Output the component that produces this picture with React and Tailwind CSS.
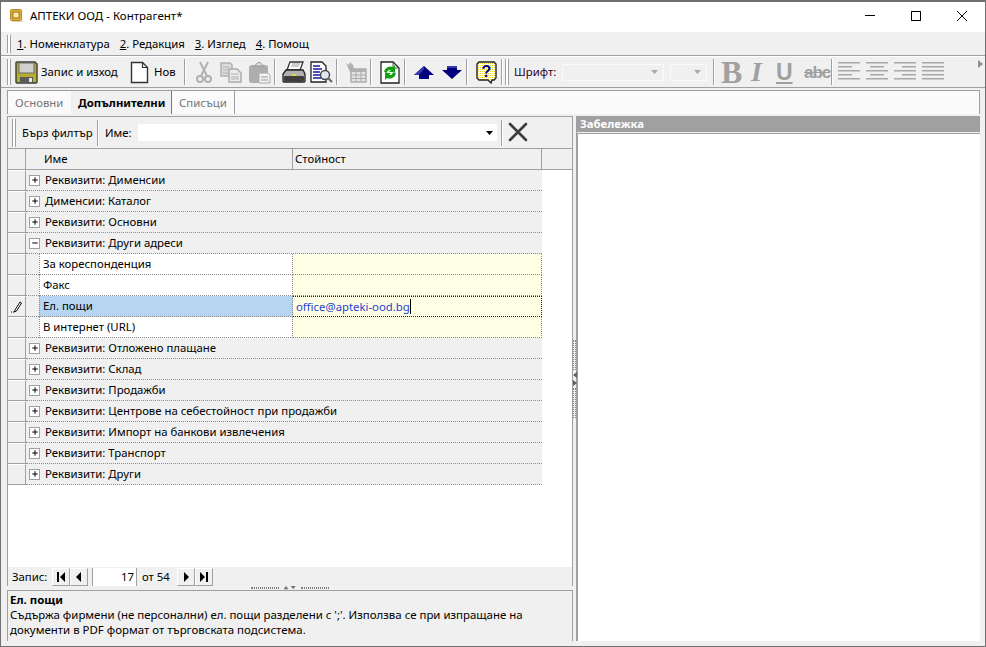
import { Plus, Minus } from "lucide-react";

const Grip = ({ h = "h-[22px]" }) => (
  <div className={`w-[4px] ${h} border-x border-[#a0a0a0] bg-white shrink-0`} />
);

const Sep = ({ h = "h-[26px]", ml = "ml-[6px]", mr = "mr-[6px]" }) => (
  <div className={`w-[2px] ${h} ${ml} ${mr} border-l border-[#a0a0a0] bg-white shrink-0`} />
);

const SaveIcon = () => (
  <svg width="23" height="23" viewBox="0 0 23 23">
    <path d="M1 2a1 1 0 0 1 1-1h18l2 2v18a1 1 0 0 1-1 1H2a1 1 0 0 1-1-1z" fill="#b5ad2c" stroke="#3a3a3a" strokeWidth="1.4" />
    <rect x="4" y="2" width="15" height="10" fill="#cfcfcf" stroke="#6a6a6a" />
    <rect x="5" y="16" width="13" height="6" fill="#5a5a5a" />
    <rect x="14" y="17" width="3" height="4" fill="#e8e8e8" />
  </svg>
);

const NewIcon = () => (
  <svg width="19" height="23" viewBox="0 0 19 23">
    <path d="M1.500 1.500h11l5 5v15h-16z" fill="#fff" stroke="#333" strokeWidth="1.4" />
    <path d="M12.500 1.500v5h5" fill="none" stroke="#333" strokeWidth="1.2" />
  </svg>
);

const CutIcon = () => (
  <svg width="16" height="23" viewBox="0 0 16 23" fill="none" stroke="#b0b0b0" strokeWidth="2">
    <path d="M4 1l7 14M12 1L5 15" />
    <circle cx="4" cy="18" r="3" />
    <circle cx="12" cy="18" r="3" />
  </svg>
);

const CopyIcon = () => (
  <svg width="22" height="21" viewBox="0 0 22 21">
    <path d="M1 1h9l2 2v11H1z" fill="#dcdcdc" stroke="#b0b0b0" strokeWidth="1.5" />
    <path d="M9 7h8l4 4v9H9z" fill="#ececec" stroke="#aaa" strokeWidth="1.5" />
    <path d="M3 5h6M3 8h5M3 11h5M11 12h8M11 15h8M11 17h8" stroke="#b0b0b0" />
  </svg>
);

const PasteIcon = () => (
  <svg width="23" height="23" viewBox="0 0 23 23">
    <rect x="1" y="4" width="19" height="18" rx="3" fill="#adadad" />
    <path d="M6 5l5-4 5 4z" fill="#ddd" stroke="#999" />
    <path d="M11 12h9l2 2v8H11z" fill="#f2f2f2" stroke="#aaa" />
    <path d="M13 16h7M13 19h7" stroke="#999" />
  </svg>
);

const PrintIcon = () => (
  <svg width="24" height="23" viewBox="0 0 24 23">
    <path d="M8 1h13l-3 8H5z" fill="#fff" stroke="#333" strokeWidth="1.3" />
    <path d="M10 3h8M9 5h8" stroke="#999" />
    <path d="M4 9h17l2 4v7a1 1 0 0 1-1 1H2a1 1 0 0 1-1-1v-7z" fill="#b0b0b0" stroke="#222" strokeWidth="1.3" />
    <rect x="2" y="15" width="20" height="5" rx="1" fill="#3d3d3d" />
    <rect x="10" y="13" width="4" height="2" fill="#e3d23a" />
  </svg>
);

const PreviewIcon = () => (
  <svg width="23" height="23" viewBox="0 0 23 23">
    <path d="M1 1h11l4 4v16H1z" fill="#fff" stroke="#222" strokeWidth="1.3" />
    <path d="M3 5h7M3 8h9M3 11h7M3 14h7M3 17h8" stroke="#1a1a9c" strokeWidth="1.6" />
    <circle cx="15" cy="14" r="4.500" fill="#dfe8ee" stroke="#444" strokeWidth="1.4" />
    <path d="M18 17l4 4" stroke="#666" strokeWidth="2.2" />
  </svg>
);

const TableIcon = () => (
  <svg width="22" height="23" viewBox="0 0 22 23">
    <path d="M1 2l3 2 1-3 3 3 1 4 4 2-4 3H6z" fill="#b0b0b0" />
    <rect x="6" y="8" width="15" height="13" fill="#e4e4e4" stroke="#aaa" strokeWidth="1.4" />
    <rect x="6" y="8" width="15" height="3" fill="#b0b0b0" />
    <path d="M11 11v10M16 11v10M6 14h15M6 17.500h15" stroke="#aaa" />
  </svg>
);

const RefreshIcon = () => (
  <svg width="20" height="23" viewBox="0 0 20 23">
    <path d="M1 1h12l6 6v15H1z" fill="#fff" stroke="#222" strokeWidth="1.3" />
    <path d="M13 2v5h5" fill="none" stroke="#555" />
    <path d="M4 11a6.500 6.500 0 0 1 9-5l2-2v7h-6l2-2a3.500 3.500 0 0 0-4 3z" fill="#12a012" />
    <path d="M16 12a6.500 6.500 0 0 1-9 5l-2 2v-7h6l-2 2a3.500 3.500 0 0 0 4-3z" fill="#12a012" />
  </svg>
);

const UpIcon = () => (
  <svg width="20" height="13" viewBox="0 0 20 13">
    <path d="M10 0l10 9h-5v4H5V9H0z" fill="#00007f" />
    <path d="M10 0L0 9h5l5-6z" fill="#3a3ab0" />
  </svg>
);

const DownIcon = () => (
  <svg width="20" height="13" viewBox="0 0 20 13">
    <path d="M10 13L0 4h5V0h10v4h5z" fill="#00007f" />
    <path d="M5 0h10v2H5z" fill="#3a3ab0" />
  </svg>
);

const HelpIcon = () => (
  <svg width="21" height="23" viewBox="0 0 21 23">
    <defs>
      <pattern id="dots" width="2" height="2" patternUnits="userSpaceOnUse">
        <rect width="2" height="2" fill="#fff" />
        <rect width="1" height="1" fill="#e8d830" />
      </pattern>
    </defs>
    <path d="M3 1h15l2 2v14l-2 2h-2l-1 3-3-3H3l-2-2V3z" fill="url(#dots)" stroke="#222" strokeWidth="1.4" />
    <text x="5.500" y="16" fontSize="16" fontWeight="700" fontFamily="Liberation Sans, sans-serif" fill="#00007f">?</text>
  </svg>
);

const CloseX = () => (
  <svg width="21" height="21" viewBox="0 0 21 21" stroke="#3c3c3c" strokeWidth="2.6" strokeLinecap="round">
    <path d="M2 2l16 16M18 2L2 18" />
  </svg>
);

const AlignIcon = ({ rows }) => (
  <svg width="22" height="22" viewBox="0 0 22 22" fill="#a8a8a8">
    {rows.map(([x, w], i) => (
      <rect key={i} x={x} y={1 + i * 4} width={w} height="1.500" />
    ))}
  </svg>
);

const TitleIcon = () => (
  <svg width="13" height="13" viewBox="0 0 13 13">
    <rect x="0.500" y="0.500" width="11" height="11" rx="1" fill="#dcb040" stroke="#b58a28" />
    <rect x="3" y="3" width="6" height="6" fill="#fbe9a8" stroke="#9c7418" />
    <rect x="2" y="12" width="11" height="1" fill="#d8d0b8" />
  </svg>
);

const NavBtn = ({ kind }) => (
  <div className="w-[18px] h-[18px] bg-[#f0f0f0] border border-[#a0a0a0] border-t-white border-l-white flex items-center justify-center">
    <svg width="10" height="10" viewBox="0 0 10 10" fill="#000">
      {kind === "first" && <path d="M1 0h2v10H1zM9 0v10L4 5z" />}
      {kind === "prev" && <path d="M7 0v10L2 5z" />}
      {kind === "next" && <path d="M3 0v10l5-5z" />}
      {kind === "last" && <path d="M7 0h2v10H7zM1 0v10l5-5z" />}
    </svg>
  </div>
);

const Caret = ({ color = "#000" }) => (
  <svg width="7" height="4" viewBox="0 0 7 4" fill={color}>
    <path d="M0 0h7L3.500 4z" />
  </svg>
);

const RowHead = ({ edit }) => (
  <div className="w-[18px] shrink-0 bg-[#f0f0f0] border-r border-b border-[#a0a0a0] border-t border-t-white flex items-center justify-center">
    {edit && (
      <svg width="11" height="12" viewBox="0 0 11 12" fill="none" stroke="#111">
        <path d="M4 9l5-8 1.500 1-5 8-2 1z" fill="#fff" />
        <path d="M0 11h3" strokeDasharray="1 1" />
      </svg>
    )}
  </div>
);

const GroupRow = ({ label, open }) => (
  <div className="flex h-[21px] shrink-0">
    <RowHead />
    <div className="w-[516px] flex items-center bg-[#f0f0f0] border-b border-dotted border-[#8c8c8c]">
      <div className="w-[11px] h-[11px] ml-[3px] bg-white border border-[#a0a0a0] flex items-center justify-center">
        {open ? <Minus size={8} strokeWidth={3} color="#000" /> : <Plus size={8} strokeWidth={3} color="#000" />}
      </div>
      <span className="ml-[5px] whitespace-nowrap">{label}</span>
    </div>
  </div>
);

const DataRow = ({ label, value, edit }) => (
  <div className="flex h-[21px] shrink-0">
    <RowHead edit={edit} />
    <div className="w-[13px] bg-[#f0f0f0] border-b border-dotted border-[#8c8c8c]" />
    <div className={`w-[254px] flex items-center pl-[3px] border border-t-0 border-dotted border-[#8c8c8c] ${edit ? "bg-[#b5d5f2]" : "bg-white"}`}>
      {label}
    </div>
    <div className={`w-[249px] flex items-center pl-[3px] border-b border-r border-dotted ${edit ? "border-t border-[#222] text-[#1f3fd0] bg-[#ffffe6]" : "border-[#8c8c8c] bg-[#ffffe6]"}`}>
      {value}
      {edit && <span className="w-px h-[15px] bg-black" />}
    </div>
  </div>
);

const after = [
  "Реквизити: Отложено плащане",
  "Реквизити: Склад",
  "Реквизити: Продажби",
  "Реквизити: Центрове на себестойност при продажби",
  "Реквизити: Импорт на банкови извлечения",
  "Реквизити: Транспорт",
  "Реквизити: Други",
];

export default function App() {
  return (
    <div className="w-[986px] h-[647px] bg-[#f0f0f0] border border-[#707070] border-t-2 flex flex-col overflow-hidden text-[11.35px] leading-none text-black font-['Noto_Sans','Open_Sans',sans-serif]">
      {/* title */}
      <div className="h-[30px] shrink-0 bg-white flex items-center pb-[3px] text-[11.5px]">
        <div className="ml-[9px]"><TitleIcon /></div>
        <span className="ml-[7px]">АПТЕКИ ООД - Контрагент*</span>
        <div className="ml-auto flex items-center">
          <div className="w-[46px] flex justify-center"><div className="w-[10px] h-px bg-black" /></div>
          <div className="w-[46px] flex justify-center"><div className="w-[10px] h-[10px] border border-black" /></div>
          <div className="w-[46px] flex justify-center">
            <svg width="10" height="10" viewBox="0 0 10 10" stroke="#000"><path d="M0 0l10 10M10 0L0 10" /></svg>
          </div>
        </div>
      </div>

      {/* menu */}
      <div className="h-[24px] shrink-0 flex items-center pl-[6px] border-b border-[#a0a0a0]">
        <Grip h="h-[18px]" />
        <div className="ml-[6px] flex gap-[10px]">
          <span><u>1</u>. Номенклатура</span>
          <span><u>2</u>. Редакция</span>
          <span><u>3</u>. Изглед</span>
          <span><u>4</u>. Помощ</span>
        </div>
      </div>

      {/* toolbar */}
      <div className="h-[32px] shrink-0 flex items-center pl-[6px] border-b border-[#a0a0a0] border-t border-t-white">
        <Grip h="h-[26px]" />
        <div className="ml-[4px]"><SaveIcon /></div>
        <span className="ml-[3px] w-[77px] whitespace-nowrap">Запис и изход</span>
        <div className="ml-[12px]"><NewIcon /></div>
        <span className="ml-[5px] w-[22px]">Нов</span>
        <Sep ml="ml-[8px]" mr="mr-[10px]" />
        <CutIcon />
        <div className="ml-[8px]"><CopyIcon /></div>
        <div className="ml-[6px]"><PasteIcon /></div>
        <Sep ml="ml-[3px]" mr="mr-[6px]" />
        <PrintIcon />
        <div className="ml-[4px]"><PreviewIcon /></div>
        <Sep ml="ml-[3px]" mr="mr-[7px]" />
        <TableIcon />
        <Sep ml="ml-[3px]" mr="mr-[8px]" />
        <RefreshIcon />
        <Sep ml="ml-[4px]" mr="mr-[8px]" />
        <UpIcon />
        <div className="ml-[8px]"><DownIcon /></div>
        <Sep ml="ml-[4px]" mr="mr-[8px]" />
        <HelpIcon />
        <Sep ml="ml-[4px]" mr="mr-[2px]" />
        <Grip h="h-[26px]" />
        <span className="ml-[5px] w-[42px] text-[#300020]">Шрифт:</span>
        <div className="ml-[6px] w-[102px] h-[17px] border border-[#fafafa] flex items-center justify-end pr-[5px]"><Caret color="#a8a8a8" /></div>
        <div className="ml-[6px] w-[37px] h-[17px] border border-[#fafafa] flex items-center justify-end pr-[5px]"><Caret color="#a8a8a8" /></div>
        <Sep ml="ml-[6px]" mr="mr-[6px]" />
        <span className="w-[22px] text-[32px] font-bold text-[#a0a0a0] font-['Liberation_Serif',serif]">B</span>
        <span className="ml-[8px] w-[14px] text-[28px] font-bold italic text-[#a0a0a0] font-['Liberation_Serif',serif]">I</span>
        <span className="ml-[11px] w-[17px] text-[23px] font-bold underline text-[#a0a0a0] font-['Liberation_Sans',sans-serif]">U</span>
        <span className="ml-[11px] w-[24px] text-[17px] font-bold text-[#a0a0a0] line-through tracking-[-1px] font-['Liberation_Sans',sans-serif]">abc</span>
        <Sep ml="ml-[3px]" mr="mr-[5px]" />
        <AlignIcon rows={[[0, 22], [0, 14], [0, 22], [0, 14], [0, 22]]} />
        <div className="ml-[6px]"><AlignIcon rows={[[0, 22], [4, 14], [0, 22], [4, 14], [0, 22]]} /></div>
        <div className="ml-[6px]"><AlignIcon rows={[[0, 22], [8, 14], [0, 22], [8, 14], [0, 22]]} /></div>
        <div className="ml-[6px]"><AlignIcon rows={[[0, 22], [0, 22], [0, 22], [0, 22], [0, 22]]} /></div>
        <svg className="ml-[34px] mb-[16px]" width="5" height="8" viewBox="0 0 5 8" fill="#909090"><path d="M0 0l5 4-5 4z" /></svg>
      </div>

      {/* tabs */}
      <div className="h-[24px] shrink-0 mt-[2px] ml-[6px] mr-[5px] flex items-stretch bg-[#fafafa] border border-b-0 border-[#a0a0a0] text-[#777]">
        <span className="pl-[7px] w-[63px] flex items-center">Основни</span>
        <span className="w-[101px] pl-[7px] flex items-center bg-[#f0f0f0] font-bold text-black border-r border-[#777] whitespace-nowrap">Допълнителни</span>
        <span className="w-[63px] pl-[7px] flex items-center border-r border-[#a0a0a0]">Списъци</span>
      </div>

      {/* body */}
      <div className="flex-1 min-h-0 flex mt-[2px] ml-[6px] mr-[5px] mb-[5px]">
        <div className="w-[566px] shrink-0 flex flex-col">
          {/* filter */}
          <div className="h-[33px] shrink-0 flex items-center pl-[4px] border border-[#a0a0a0]">
            <Grip h="h-[28px]" />
            <span className="ml-[6px] w-[71px] whitespace-nowrap">Бърз филтър</span>
            <Sep ml="ml-[4px]" mr="mr-[6px]" />
            <span className="w-[27px]">Име:</span>
            <div className="ml-[6px] w-[359px] h-[17px] bg-white flex items-center justify-end pr-[4px]"><Caret /></div>
            <Sep ml="ml-[4px]" mr="mr-[5px]" />
            <CloseX />
          </div>

          {/* grid */}
          <div className="flex-1 min-h-0 flex flex-col bg-white border-x border-[#a0a0a0]">
            <div className="h-[21px] shrink-0 flex bg-[#f0f0f0] border-b border-[#a0a0a0]">
              <div className="w-[18px] border-r border-[#a0a0a0]" />
              <div className="w-[267px] pl-[18px] flex items-center border-r border-[#a0a0a0]">Име</div>
              <div className="w-[249px] pl-[2px] flex items-center border-r border-[#a0a0a0]">Стойност</div>
            </div>
            <GroupRow label="Реквизити: Дименсии" />
            <GroupRow label="Дименсии: Каталог" />
            <GroupRow label="Реквизити: Основни" />
            <GroupRow label="Реквизити: Други адреси" open />
            <DataRow label="За кореспонденция" />
            <DataRow label="Факс" />
            <DataRow label="Ел. пощи" value="office@apteki-ood.bg" edit />
            <DataRow label="В интернет (URL)" />
            {after.map((label) => (
              <GroupRow key={label} label={label} />
            ))}
          </div>

          {/* record nav */}
          <div className="h-[19px] shrink-0 flex items-center pl-[4px] border-x border-[#a0a0a0]">
            <span className="w-[35px]">Запис:</span>
            <div className="ml-[5px] flex"><NavBtn kind="first" /><NavBtn kind="prev" /></div>
            <div className="ml-[4px] w-[45px] h-[18px] bg-white border-x border-[#a0a0a0] flex items-center justify-end pr-[2px]">17</div>
            <span className="ml-[5px] w-[27px] whitespace-nowrap">от 54</span>
            <div className="ml-[8px] flex"><NavBtn kind="next" /><NavBtn kind="last" /></div>
          </div>

          {/* splitter */}
          <div className="h-[4px] shrink-0 flex items-center justify-center gap-[3px]">
            <div className="w-[28px] h-[2px] border-y border-dotted border-[#808080]" />
            <svg width="16" height="4" viewBox="0 0 16 5" fill="#707070"><path d="M0 4l3-4 3 4zM9 0h6l-3 4z" /></svg>
            <div className="w-[28px] h-[2px] border-y border-dotted border-[#808080]" />
          </div>

          {/* hint */}
          <div className="h-[51px] shrink-0 pl-[2px] pt-[1px] border border-[#a0a0a0] border-b-0 leading-[15px] whitespace-nowrap text-[11.45px]">
            <div className="font-bold">Ел. пощи</div>
            <div>Съдържа фирмени (не персонални) ел. пощи разделени с ';'. Използва се при изпращане на</div>
            <div>документи в PDF формат от търговската подсистема.</div>
          </div>
        </div>

        {/* vertical splitter */}
        <div className="w-[4px] shrink-0 flex flex-col items-center justify-center gap-[2px] border-r border-[#a0a0a0]">
          <div className="w-[3px] h-[30px] border-x border-dotted border-[#808080]" />
          <svg width="4" height="14" viewBox="0 0 4 14" fill="#606060"><path d="M4 0v6L0 3zM0 8v6l4-3z" /></svg>
          <div className="w-[3px] h-[30px] border-x border-dotted border-[#808080]" />
        </div>

        {/* notes */}
        <div className="flex-1 min-w-0 flex flex-col">
          <div className="h-[16px] shrink-0 bg-[#a0a0a0] text-white font-bold flex items-center pl-[3px]">Забележка</div>
          <div className="flex-1 mt-[1px] bg-white border-t border-l border-[#a0a0a0]" />
        </div>
      </div>
    </div>
  );
}
